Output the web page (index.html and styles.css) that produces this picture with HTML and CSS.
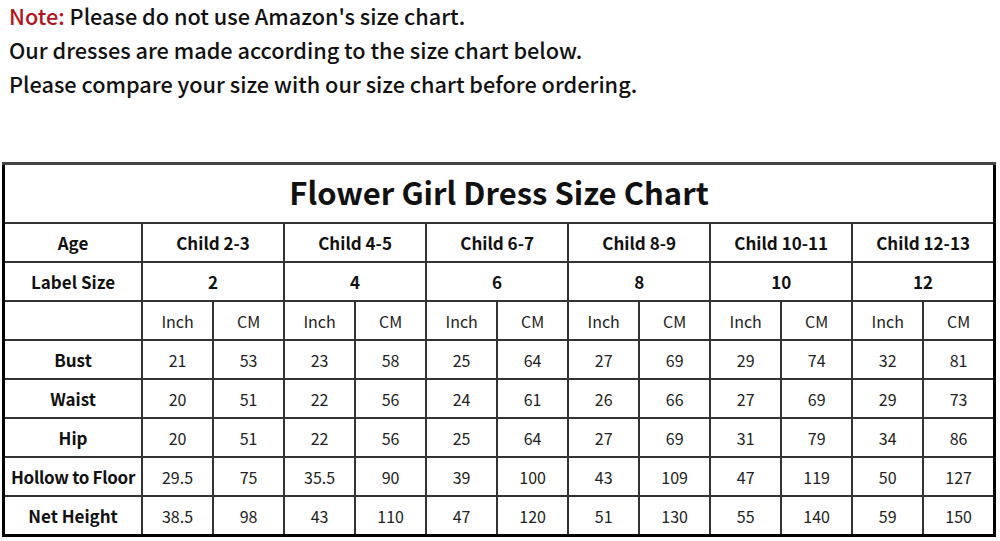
FILE: index.html
```html
<!DOCTYPE html>
<html>
<head>
<meta charset="utf-8">
<link rel="stylesheet" href="styles.css">
</head>
<body>
<div class="notes">
  <p><span class="note">Note:</span> Please do not use Amazon's size chart.</p>
  <p>Our dresses are made according to the size chart below.</p>
  <p>Please compare your size with our size chart before ordering.</p>
</div>
<table class="chart">
  <colgroup>
    <col class="c-label">
    <col><col><col><col><col><col><col><col><col><col><col><col>
  </colgroup>
  <tr class="r-title"><th colspan="13" class="title">Flower Girl Dress Size Chart</th></tr>
  <tr><th>Age</th><th colspan="2">Child 2-3</th><th colspan="2">Child 4-5</th><th colspan="2">Child 6-7</th><th colspan="2">Child 8-9</th><th colspan="2">Child 10-11</th><th colspan="2">Child 12-13</th></tr>
  <tr><th>Label Size</th><th colspan="2">2</th><th colspan="2">4</th><th colspan="2">6</th><th colspan="2">8</th><th colspan="2">10</th><th colspan="2">12</th></tr>
  <tr><th></th><td>Inch</td><td>CM</td><td>Inch</td><td>CM</td><td>Inch</td><td>CM</td><td>Inch</td><td>CM</td><td>Inch</td><td>CM</td><td>Inch</td><td>CM</td></tr>
  <tr><th>Bust</th><td>21</td><td>53</td><td>23</td><td>58</td><td>25</td><td>64</td><td>27</td><td>69</td><td>29</td><td>74</td><td>32</td><td>81</td></tr>
  <tr><th>Waist</th><td>20</td><td>51</td><td>22</td><td>56</td><td>24</td><td>61</td><td>26</td><td>66</td><td>27</td><td>69</td><td>29</td><td>73</td></tr>
  <tr><th>Hip</th><td>20</td><td>51</td><td>22</td><td>56</td><td>25</td><td>64</td><td>27</td><td>69</td><td>31</td><td>79</td><td>34</td><td>86</td></tr>
  <tr><th class="tight">Hollow to Floor</th><td>29.5</td><td>75</td><td>35.5</td><td>90</td><td>39</td><td>100</td><td>43</td><td>109</td><td>47</td><td>119</td><td>50</td><td>127</td></tr>
  <tr><th>Net Height</th><td>38.5</td><td>98</td><td>43</td><td>110</td><td>47</td><td>120</td><td>51</td><td>130</td><td>55</td><td>140</td><td>59</td><td>150</td></tr>
</table>
</body>
</html>
```
FILE: styles.css
```css
html, body {
  margin: 0;
  padding: 0;
  background: #fff;
}
body {
  font-family: "Noto Sans CJK SC", "Noto Sans", sans-serif;
  color: #111;
}
.notes {
  padding: 0 0 0 9px;
  height: 162px;
}
.notes p {
  margin: 0;
  font-size: 21.7px;
  line-height: 34px;
  font-weight: 500;
  position: relative;
  top: -1px;
}
.note {
  color: #b3131b;
}
.chart {
  margin-left: 2px;
  width: 994px;
  border-collapse: collapse;
  table-layout: fixed;
  border: 3px solid #000;
}
.chart col { width: 71px; }
.chart col.c-label { width: 138.5px; }
.chart th, .chart td {
  border: 2px solid #333;
  height: 37px;
  padding: 0;
  text-align: center;
  vertical-align: middle;
  font-size: 16px;
  line-height: 20px;
  white-space: nowrap;
  overflow: hidden;
}
.chart th {
  font-weight: 700;
  font-size: 17px;
}
.chart td {
  font-weight: 400;
  color: #222;
}
.chart th.title {
  height: 54px;
  padding-bottom: 3px;
  font-size: 31px;
  line-height: 38px;
  border-top: 3px solid #444;
}
.chart th.tight {
  letter-spacing: -0.3px;
}
```
